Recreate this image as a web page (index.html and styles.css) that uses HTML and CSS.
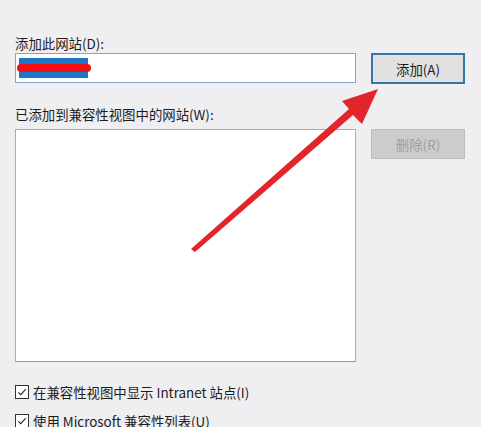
FILE: index.html
```html
<!DOCTYPE html>
<html lang="zh-CN">
<head>
<meta charset="utf-8">
<title>兼容性视图设置</title>
<link rel="stylesheet" href="styles.css">
</head>
<body>
<div class="dialog">
  <div class="label label-first">添加此网站(D):</div>
  <div class="row row-add">
    <div class="textbox"><span class="selection"><span class="redact"></span></span></div>
    <div class="btn btn-default">添加(A)</div>
  </div>
  <div class="label label-second">已添加到兼容性视图中的网站(W):</div>
  <div class="row row-list">
    <div class="listbox"></div>
    <div class="btn btn-disabled">删除(R)</div>
  </div>
  <label class="check check-first">
    <span class="box"><svg viewBox="0 0 13 13" width="13" height="13"><path d="M2.5 6.8 L5.2 9.4 L10.6 3.4" fill="none" stroke="#222" stroke-width="1.1"/></svg></span>
    <span>在兼容性视图中显示 Intranet 站点(I)</span>
  </label>
  <label class="check check-second">
    <span class="box"><svg viewBox="0 0 13 13" width="13" height="13"><path d="M2.5 6.8 L5.2 9.4 L10.6 3.4" fill="none" stroke="#222" stroke-width="1.1"/></svg></span>
    <span>使用 Microsoft 兼容性列表(U)</span>
  </label>
</div>
<svg class="arrow" viewBox="0 0 481 427" width="481" height="427">
  <path d="M191 249 L195 252 L353 115 L362 124 L378 89 L342 101 L349 109 Z" fill="#e2242b"/>
</svg>
</body>
</html>
```

FILE: styles.css
```css
html, body {
  margin: 0;
  padding: 0;
}
body {
  width: 481px;
  height: 427px;
  overflow: hidden;
  background: #efeef0;
  color: #1c1c1c;
  font-family: "Noto Sans CJK SC", "Noto Sans", sans-serif;
  font-size: 13.4px;
  position: relative;
}
.dialog {
  display: flex;
  flex-direction: column;
  padding: 34px 16px 0 15px;
}
.label {
  height: 18px;
  line-height: 18px;
  white-space: nowrap;
}
.label-first {
  margin-bottom: 1px;
}
.label-second {
  margin-top: 21px;
  margin-bottom: 6px;
}
.row {
  display: flex;
  gap: 15px;
  align-items: flex-start;
}
.textbox {
  box-sizing: border-box;
  width: 341px;
  height: 30px;
  background: #fff;
  border: 1px solid #7fa6cb;
  padding: 4px 3px;
  display: flex;
  align-items: center;
}
.selection {
  position: relative;
  display: block;
  width: 69px;
  height: 20px;
  background: #1a76c6;
}
.redact {
  position: absolute;
  left: -2px;
  right: -3px;
  top: 6px;
  height: 8px;
  border-radius: 4px;
  background: #f40d12;
}
.btn {
  box-sizing: border-box;
  width: 94px;
  height: 30px;
  display: flex;
  align-items: center;
  justify-content: center;
  line-height: 18px;
}
.btn-default {
  background: #e1e1e1;
  border: 2px solid #3476a6;
  color: #1c1c1c;
  height: 31px;
}
.btn-disabled {
  background: #cccccc;
  border: 1px solid #bfbfbf;
  color: #a0a0a0;
}
.listbox {
  box-sizing: border-box;
  width: 341px;
  height: 233px;
  background: #fff;
  border: 1px solid #acacac;
  border-bottom-color: #9a9a9a;
}
.check {
  display: flex;
  align-items: center;
  gap: 4px;
  height: 18px;
  line-height: 18px;
  white-space: nowrap;
}
.check-first {
  margin-top: 21px;
}
.check-second {
  margin-top: 11px;
}
.box {
  box-sizing: border-box;
  width: 14px;
  height: 14px;
  border: 1px solid #333;
  background: #fff;
  display: flex;
  align-items: center;
  justify-content: center;
}
.box svg {
  display: block;
  width: 12px;
  height: 12px;
}
.arrow {
  position: absolute;
  left: 0;
  top: 0;
  pointer-events: none;
}
```
